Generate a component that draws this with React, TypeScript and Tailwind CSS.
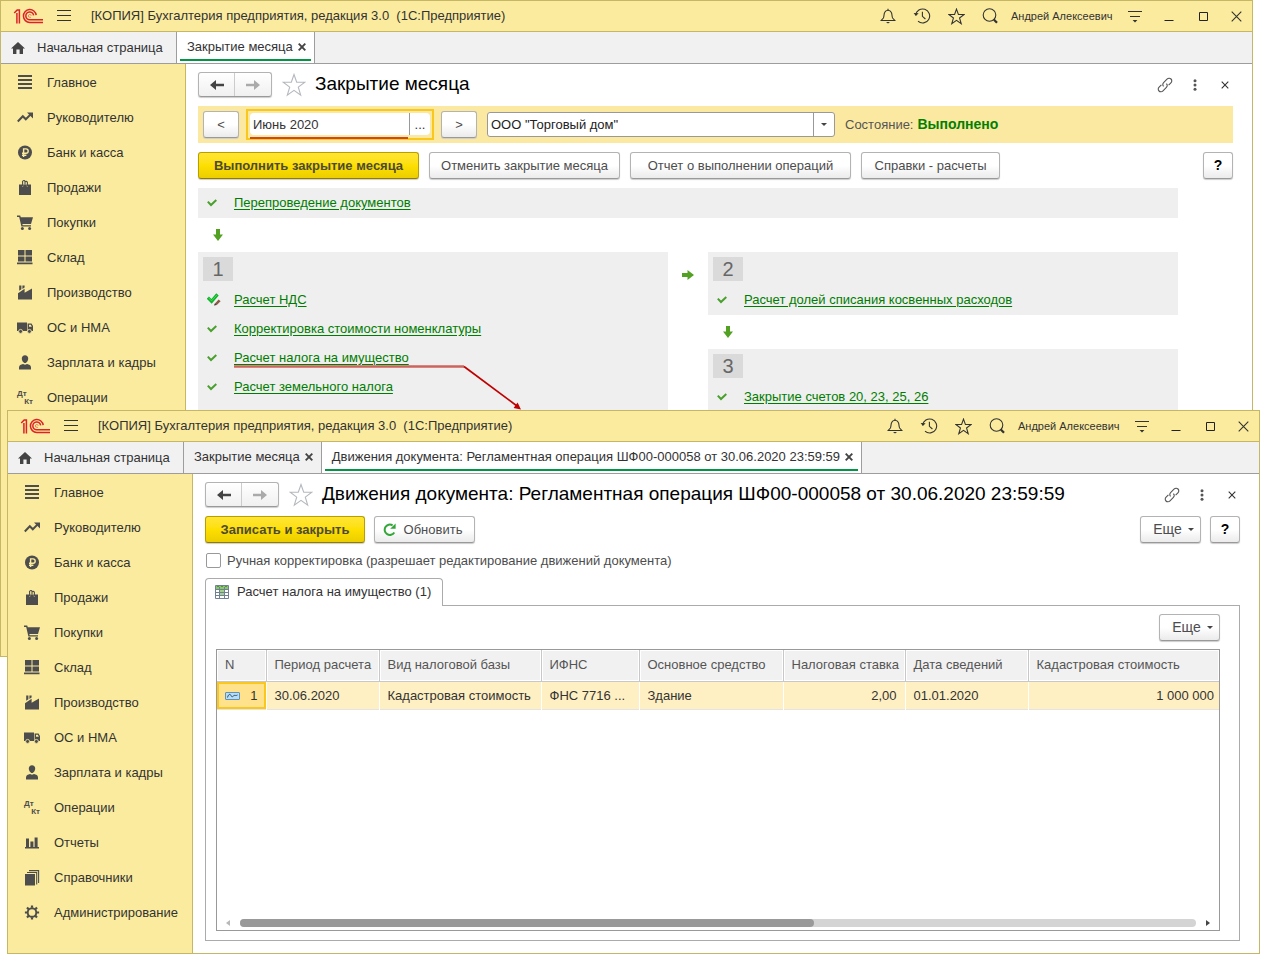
import type { ReactNode } from 'react';
import clsx from 'clsx';

const INK = '#4d4d4d';

/* ---------- title bar drawings ---------- */

const Logo = () => (
  <svg width="30" height="16" viewBox="0 0 30 16" fill="none" stroke="#dc2127" strokeWidth="1.5" aria-hidden="true">
    <path d="M1.2 5L4.2 2H6.4V15.400M3.900 5V15.400" />
    <path d="M23.200 7.200A6.400 6.400 0 1 0 16.800 14.400H30" />
    <path d="M20.600 7.400A3.900 3.900 0 1 0 16.800 11.800H30" />
    <path d="M18.200 7.800A1.400 1.400 0 1 0 16.800 9.300H18" strokeWidth="1" strokeOpacity=".5" />
  </svg>
);

const Burger = () => (
  <svg width="14" height="12" viewBox="0 0 14 12" stroke="#333" aria-hidden="true">
    <path d="M0 .5H14M0 5.5H14M0 10.5H14" />
  </svg>
);

const Bell = () => (
  <svg width="16" height="16" viewBox="0 0 16 16" fill="none" stroke="#333" strokeWidth="1.1" aria-hidden="true">
    <path d="M1.2 12.5H14.8L12.6 10C11.8 8.8 12.2 6 11.4 4.4C10.8 3.1 9.6 2.2 8 2.2S5.2 3.1 4.6 4.4C3.8 6 4.2 8.8 3.4 10Z" />
    <path d="M8 .8V2.2" />
    <path d="M6 14H10L8 15.6Z" fill="#333" stroke="none" />
  </svg>
);

const History = () => (
  <svg width="18" height="16" viewBox="0 0 18 16" fill="none" stroke="#333" strokeWidth="1.1" aria-hidden="true">
    <path d="M2.7 7.2A7 7 0 1 1 5 13.2" />
    <path d="M9.4 3.8V8.3L12.4 11" />
    <path d="M.6 4.9L2.9 8L5.6 5.2Z" fill="#333" stroke="none" />
  </svg>
);

const Star = ({ size, color }: { size: number; color: string }) => (
  <svg width={size} height={size} viewBox="0 0 24 24" fill="none" stroke={color} strokeWidth={size > 18 ? 1.1 : 1.5} aria-hidden="true">
    <path d="M12 1.5L14.7 9.2H22.8L16.3 14.1L18.7 22.2L12 17.4L5.3 22.2L7.7 14.1L1.2 9.2H9.3Z" />
  </svg>
);

const Magnifier = () => (
  <svg width="16" height="16" viewBox="0 0 16 16" fill="none" stroke="#333" aria-hidden="true">
    <circle cx="7.5" cy="7" r="6.3" strokeWidth="1.1" />
    <path d="M11.8 11.4L15 14.8" strokeWidth="2.2" />
  </svg>
);

const ServiceMenu = () => (
  <svg width="14" height="13" viewBox="0 0 14 13" stroke="#333" aria-hidden="true">
    <path d="M0 1.5H14M2 6.5H12" />
    <path d="M4.6 10H9.4L7 12.6Z" fill="#333" stroke="none" />
  </svg>
);

const Minimize = () => (
  <svg width="10" height="10" viewBox="0 0 10 10" stroke="#222" aria-hidden="true"><path d="M.5 9.5H9.5" /></svg>
);
const Maximize = () => (
  <svg width="9" height="9" viewBox="0 0 9 9" fill="none" stroke="#222" aria-hidden="true"><path d="M.5 .5H8.5V8.5H.5Z" /></svg>
);
const Cross = ({ size, width = 1.1, color = '#333' }: { size: number; width?: number; color?: string }) => (
  <svg width={size} height={size} viewBox={`0 0 ${size} ${size}`} stroke={color} strokeWidth={width} aria-hidden="true">
    <path d={`M.7 .7L${size - 0.7} ${size - 0.7}M${size - 0.7} .7L.7 ${size - 0.7}`} />
  </svg>
);

const Home = () => (
  <svg width="14" height="12" viewBox="0 0 14 12" fill="#444" aria-hidden="true">
    <path d="M7 0L14 6.6H12V12H8.6V7.6H5.4V12H2V6.6H0Z" />
  </svg>
);

/* ---------- page header drawings ---------- */

const Arrow = ({ flip, color }: { flip?: boolean; color: string }) => (
  <svg width="14" height="10" viewBox="0 0 14 10" fill={color} className={flip ? 'rotate-180' : ''} aria-hidden="true">
    <path d="M0 5L6 0V3.7H14V6.3H6V10Z" />
  </svg>
);

const ChainLink = () => (
  <svg width="16" height="16" viewBox="0 0 16 16" fill="none" stroke="#555" strokeWidth="1.1" aria-hidden="true">
    <path d="M6.6 9.4C5.4 8.2 5.6 6.6 6.6 5.6L10 2.2C11.2 1 13 1 14 2C15.1 3.1 15 4.8 13.9 5.9L11.6 8.2" />
    <path d="M9.4 6.6C10.6 7.8 10.4 9.4 9.4 10.4L6 13.8C4.8 15 3 15 2 14C.9 12.9 1 11.2 2.1 10.1L4.4 7.8" />
  </svg>
);

const Dots = () => (
  <svg width="4" height="12" viewBox="0 0 4 12" fill="#555" aria-hidden="true">
    <circle cx="2" cy="1.7" r="1.5" /><circle cx="2" cy="6" r="1.5" /><circle cx="2" cy="10.3" r="1.5" />
  </svg>
);

const Caret = () => (
  <svg width="6" height="3" viewBox="0 0 6 3" fill="#444" aria-hidden="true"><path d="M0 0H6L3 3Z" /></svg>
);

/* ---------- section icons ---------- */

const Icon = ({ children }: { children: ReactNode }) => (
  <svg width="16" height="16" viewBox="0 0 16 16" fill={INK} aria-hidden="true">{children}</svg>
);

const icons = {
  main: <Icon><path d="M1 0H15V2H1ZM1 4H15V6H1ZM1 8H15V10H1ZM1 12H15V14H1Z" /></Icon>,
  chief: (
    <Icon>
      <path d="M.8 11.500L5.8 6.200L8.8 9.300L13.4 4.600" fill="none" stroke={INK} strokeWidth="2" />
      <path d="M10 2.400H16V8.600L14 6.600L12 4.600Z" />
    </Icon>
  ),
  bank: (
    <Icon>
      <circle cx="8" cy="7.500" r="7" />
      <path d="M6.600 11.900V3.900H9A2.100 2.100 0 0 1 9 8.300H5M5 10.200H9.400" fill="none" stroke="#fbeb9e" strokeWidth="1.4" />
    </Icon>
  ),
  sales: (
    <Icon>
      <path d="M2 4.500H5.200V6.500H6.200V4.500H9.800V6.500H10.800V4.500H14V15H2Z" />
      <path d="M5.600 6V2.400A1.300 1.300 0 0 1 8 1.400V4.500M8 4.500V2A1.300 1.300 0 0 1 10.400 2.400V6" fill="none" stroke={INK} strokeWidth="1.100" />
    </Icon>
  ),
  purchases: (
    <Icon>
      <path d="M0 .5H3.2L3.8 2.2H16L14 9H5.4L5.6 10.2H14V11.600H4.400L2.200 2H0Z" />
      <circle cx="5.400" cy="13.400" r="1.500" /><circle cx="12.600" cy="13.400" r="1.500" />
    </Icon>
  ),
  stock: <Icon><path d="M1 0H7.500V5.500H1ZM8.500 0H15V5.500H8.500ZM1 6.500H7.500V11.500H1ZM8.500 6.500H15V11.500H8.500ZM0 12.500H15.500V14.200H0Z" /></Icon>,
  production: (
    <Icon>
      <path d="M1 14.500V8.200L7.600 3.800V7.800L15 3.500V14.500Z" />
      <path d="M2.200 .5H4.400V4.200L2.200 5.800ZM5.400 .5H7.600V2.400L5.400 4Z" />
    </Icon>
  ),
  assets: (
    <Icon>
      <path d="M0 2.500H10V11H0ZM10.600 3.500H14.500L16 6V11H10.600Z" />
      <path d="M12 4.700H13.800L14.800 6.800H12Z" fill="#fbeb9e" />
      <circle cx="3.600" cy="11.400" r="2" stroke="#fbeb9e" strokeWidth=".8" /><circle cx="12.400" cy="11.400" r="2" stroke="#fbeb9e" strokeWidth=".8" />
    </Icon>
  ),
  staff: (
    <Icon>
      <path d="M8 .3C10 .3 11.2 1.700 11.2 3.500C11.2 5.500 9.800 8 8 8S4.800 5.500 4.800 3.500C4.800 1.700 6 .3 8 .3Z" />
      <path d="M2 14.500V12.400C2 10.200 4 9.400 6 8.900L8 9.700L10 8.900C12 9.400 14 10.200 14 12.400V14.500Z" />
    </Icon>
  ),
  operations: (
    <span className="flex w-4 flex-col text-[8px] leading-[8px] font-bold text-[#4d4d4d]" aria-hidden="true">
      <span>Дт</span>
      <span className="self-end">Кт</span>
    </span>
  ),
  reports: <Icon><path d="M2 3.500H5V12H2ZM6.400 6.400H9.400V12H6.400ZM10.600 2.600H13.600V12H10.600ZM1 12H15V13.500H1Z" /></Icon>,
  catalogs: (
    <Icon>
      <path d="M1 4H11V15.500H1Z" />
      <path d="M3 2.500H12.700V14.600M5 .6H14.600V13" fill="none" stroke={INK} strokeWidth="1.1" />
    </Icon>
  ),
  admin: (
    <Icon>
      <circle cx="8" cy="7.500" r="4.300" fill="none" stroke={INK} strokeWidth="1.900" />
      <path d="M8 .4V2.800M8 12.200V14.600M.9 7.500H3.300M12.700 7.500H15.100M3 2.500L4.700 4.200M11.300 10.800L13 12.500M3 12.500L4.700 10.800M11.300 4.200L13 2.500" stroke={INK} strokeWidth="2.200" />
    </Icon>
  ),
};

type Section = { icon: keyof typeof icons; label: string };

const sections: Section[] = [
  { icon: 'main', label: 'Главное' },
  { icon: 'chief', label: 'Руководителю' },
  { icon: 'bank', label: 'Банк и касса' },
  { icon: 'sales', label: 'Продажи' },
  { icon: 'purchases', label: 'Покупки' },
  { icon: 'stock', label: 'Склад' },
  { icon: 'production', label: 'Производство' },
  { icon: 'assets', label: 'ОС и НМА' },
  { icon: 'staff', label: 'Зарплата и кадры' },
  { icon: 'operations', label: 'Операции' },
  { icon: 'reports', label: 'Отчеты' },
  { icon: 'catalogs', label: 'Справочники' },
  { icon: 'admin', label: 'Администрирование' },
];

/* ---------- window chrome ---------- */

const BarButton = ({ label, className, children }: { label: string; className?: string; children: ReactNode }) => (
  <button type="button" aria-label={label} className={clsx('flex h-[30px] shrink-0 items-center justify-center', className ?? 'w-[34px]')}>
    {children}
  </button>
);

const TitleBar = () => (
  <header className="flex h-[31px] shrink-0 items-center border-b border-[#c6b765] bg-[#fbeb9e] pl-3 text-[13px] text-[#333]">
    <Logo />
    <button type="button" aria-label="Главное меню" className="ml-[14px] flex h-[30px] items-center"><Burger /></button>
    <span className="ml-5 whitespace-nowrap">[КОПИЯ] Бухгалтерия предприятия, редакция 3.0{'\u00a0'} (1С:Предприятие)</span>
    <div className="ml-auto flex items-center">
      <BarButton label="Уведомления"><Bell /></BarButton>
      <BarButton label="История"><History /></BarButton>
      <BarButton label="Избранное"><Star size={17} color="#333" /></BarButton>
      <BarButton label="Поиск"><Magnifier /></BarButton>
      <span className="w-[111px] pl-1 text-[11px] whitespace-nowrap">Андрей Алексеевич</span>
      <BarButton label="Настройки"><ServiceMenu /></BarButton>
      <BarButton label="Свернуть"><Minimize /></BarButton>
      <BarButton label="Развернуть"><Maximize /></BarButton>
      <BarButton label="Закрыть" className="w-8"><Cross size={11} /></BarButton>
    </div>
  </header>
);

const Tab = ({ label, active }: { label: string; active?: boolean }) => (
  <div className={clsx('flex border-r border-[#9d9d9d] px-[3px]', active && 'bg-white')}>
    <div className={clsx('mb-0.5 flex items-center gap-[5px] border-b-2 pt-[3px] pr-[5px] pl-[7px]', active ? 'border-[#009646]' : 'border-transparent')}>
      <a href="#" className="whitespace-nowrap">{label}</a>
      <button type="button" aria-label={`Закрыть ${label}`} className="flex w-2 items-center py-1"><Cross size={8} width={1.9} color="#444" /></button>
    </div>
  </div>
);

const TabBar = ({ tabs }: { tabs: string[] }) => (
  <nav className="flex h-8 shrink-0 border-b border-[#9d9d9d] bg-[#f1f1f1] text-[13px] text-[#333]">
    <a href="#" className="flex w-[176px] items-center gap-3 border-r border-[#9d9d9d] pl-[10px] whitespace-nowrap"><Home />Начальная страница</a>
    {tabs.map((tab, i) => <Tab key={tab} label={tab} active={i === tabs.length - 1} />)}
  </nav>
);

const Sidebar = ({ items }: { items: Section[] }) => (
  <ul className="w-[185px] shrink-0 border-r border-[#c6b765] bg-[#fbeb9e] pb-6 text-[13px] text-[#333]">
    {items.map(({ icon, label }) => (
      <li key={label}>
        <a href="#" className="flex h-[35px] items-center gap-[14px] pt-0.5 pl-4 whitespace-nowrap">{icons[icon]}{label}</a>
      </li>
    ))}
  </ul>
);

const Window = ({ tabs, items, className, children }: { tabs: string[]; items: Section[]; className?: string; children: ReactNode }) => (
  <section className={clsx('flex flex-col border border-[#c6b765] bg-white', className)}>
    <TitleBar />
    <TabBar tabs={tabs} />
    <div className="flex min-h-0 flex-1">
      <Sidebar items={items} />
      <div className="flex min-w-0 flex-1 flex-col pt-2 pr-[19px] pb-3 pl-3">{children}</div>
    </div>
  </section>
);

const PageHeader = ({ title }: { title: string }) => (
  <div className="flex h-[25px] shrink-0 items-center">
    <div className="flex h-[25px] rounded-[3px] border border-[#b3b3b3] border-b-[#999] bg-linear-to-b from-white to-[#f0f0f0] shadow-[0_1px_1px_#ccc]">
      <button type="button" aria-label="Назад" className="flex w-9 items-center justify-center border-r border-[#ccc]"><Arrow color="#444" /></button>
      <button type="button" aria-label="Вперед" className="flex w-9 items-center justify-center"><Arrow flip color="#aaa" /></button>
    </div>
    <button type="button" aria-label="В избранное" className="ml-[10px]"><Star size={24} color="#b4b8be" /></button>
    <h1 className="ml-[9px] text-[19px] whitespace-nowrap text-black">{title}</h1>
    <div className="ml-auto flex gap-[14px]">
      <button type="button" aria-label="Ссылка" className="flex w-4 items-center justify-center"><ChainLink /></button>
      <button type="button" aria-label="Дополнительно" className="flex w-4 items-center justify-center"><Dots /></button>
      <button type="button" aria-label="Закрыть форму" className="flex w-4 items-center justify-center"><Cross size={8} /></button>
    </div>
  </div>
);

const Button = ({ primary, className, children }: { primary?: boolean; className?: string; children: ReactNode }) => (
  <button
    type="button"
    className={clsx(
      'flex h-[27px] shrink-0 items-center justify-center rounded-[3px] border bg-linear-to-b text-[13px] whitespace-nowrap shadow-[0_1px_1px_#ccc]',
      primary
        ? 'border-[#b79f00] border-b-[#8f7c00] from-[#ffe533] via-[#fddf00] to-[#ecce00] font-bold text-[#4d4a33]'
        : 'border-[#b3b3b3] border-b-[#999] from-white via-white to-[#ebebeb] text-[#4d4d4d]',
      className,
    )}
  >
    {children}
  </button>
);

const HelpButton = () => <Button className="ml-auto w-[30px]"><span className="text-[14px] font-bold text-black">?</span></Button>;

/* ---------- month closing ---------- */

const Check = () => (
  <svg width="10" height="8" viewBox="0 0 10 8" fill="none" stroke="#4aa02c" strokeWidth="2" aria-hidden="true"><path d="M.8 2.600L4 6L9.300 1" /></svg>
);

const CheckEdited = () => (
  <svg width="14" height="13" viewBox="0 0 14 13" fill="none" aria-hidden="true">
    <path d="M.8 4.600L4.600 8.400L10.500 1.400" stroke="#12b32c" strokeWidth="3.200" />
    <path d="M1.400 4.800L4.600 7.800L10 1.800" stroke="#3fe04f" strokeWidth="1" />
    <path d="M7.800 10.800L11.600 6.600L13.600 8.200L9.800 12Z" fill="#8a5a44" />
    <path d="M7 12.600L7.800 10.600L9.800 12Z" fill="#3a2a22" />
  </svg>
);

const FlowArrow = ({ right }: { right?: boolean }) => (
  <svg width="12" height="12" viewBox="0 0 12 12" fill="#52a122" className={right ? '-rotate-90' : ''} aria-hidden="true">
    <path d="M4 0H8V5.500H11L6 12L1 5.500H4Z" />
  </svg>
);

const Operation = ({ label, edited, children }: { label: string; edited?: boolean; children?: ReactNode }) => (
  <li className="relative flex h-[29px] items-center pl-[9px] text-[13px]">
    <span className="w-[27px]">{edited ? <CheckEdited /> : <Check />}</span>
    <a href="#" className="whitespace-nowrap text-[#007d00] underline underline-offset-2">{label}</a>
    {children}
  </li>
);

const Stage = ({ number, className, children }: { number: number; className?: string; children: ReactNode }) => (
  <div className={clsx('bg-[#efefef] pt-[5px]', className)}>
    <div className="mb-1 ml-[5px] flex h-6 w-[30px] items-center justify-center bg-[#dadada] text-[20px] text-[#666]">{number}</div>
    <ul className="pb-px">{children}</ul>
  </div>
);

const CalloutArrow = () => (
  <svg width="292" height="50" viewBox="0 0 292 50" fill="none" className="pointer-events-none absolute top-[21px] left-[35px]" aria-hidden="true">
    <path d="M1 2.500H231" stroke="#c0281c" strokeOpacity=".7" strokeWidth="2.400" />
    <path d="M231 2.500L284 42" stroke="#c00000" strokeWidth="1.700" />
    <path d="M288 45.500L280.600 44L284.600 38.600Z" fill="#c00000" />
  </svg>
);

const MonthClosing = () => (
  <>
    <PageHeader title="Закрытие месяца" />
    <div className="mt-[9px] flex h-[37px] shrink-0 items-center bg-[#fce9a1] px-[5px] text-[13px]">
      <Button className="w-9">&lt;</Button>
      <div className="ml-[7px] flex h-[31px] w-[188px] border-2 border-[#fac71e] p-0.5">
        <div className="flex flex-1 flex-col">
          <div className="flex h-[23px] rounded-sm bg-white">
            <input aria-label="Период" defaultValue="Июнь 2020" className="w-[160px] border-r border-[#999] pt-0.5 pl-[3px] text-[#333] outline-none" />
            <button type="button" aria-label="Выбрать период" className="flex-1 pt-0.5 text-[#333]">...</button>
          </div>
          <div className="h-0.5 w-[158px] shrink-0 translate-y-0.5 bg-[#c9472a]" />
        </div>
      </div>
      <Button className="ml-[7px] w-9">&gt;</Button>
      <div className="ml-[10px] flex h-[25px] w-[348px] overflow-hidden rounded-[3px] border border-[#999] bg-white">
        <select aria-label="Организация" className="min-w-0 flex-1 appearance-none pl-[3px] text-[#222] outline-none">
          <option>ООО "Торговый дом"</option>
        </select>
        <span className="pointer-events-none flex w-[21px] items-center justify-center border-l border-[#999]"><Caret /></span>
      </div>
      <span className="ml-[10px] text-[#555]">Состояние:</span>
      <span className="ml-1 text-[14px] font-bold text-[#008000]">Выполнено</span>
    </div>
    <div className="mt-[9px] flex shrink-0 gap-[10px]">
      <Button primary className="w-[221px]">Выполнить закрытие месяца</Button>
      <Button className="w-[191px]">Отменить закрытие месяца</Button>
      <Button className="w-[221px]">Отчет о выполнении операций</Button>
      <Button className="w-[139px]">Справки - расчеты</Button>
      <HelpButton />
    </div>
    <div className="mt-[9px] mr-[55px] flex min-h-0 flex-1 flex-col">
      <ul className="h-[30px] shrink-0 bg-[#efefef]"><Operation label="Перепроведение документов" /></ul>
      <div className="flex h-[34px] shrink-0 items-center pl-[14px]"><FlowArrow /></div>
      <div className="flex min-h-0 flex-1">
        <Stage number={1} className="flex-1">
          <Operation label="Расчет НДС" edited />
          <Operation label="Корректировка стоимости номенклатуры" />
          <Operation label="Расчет налога на имущество"><CalloutArrow /></Operation>
          <Operation label="Расчет земельного налога" />
        </Stage>
        <div className="flex w-10 justify-center pt-[17px]"><FlowArrow right /></div>
        <div className="flex flex-1 flex-col">
          <Stage number={2}><Operation label="Расчет долей списания косвенных расходов" /></Stage>
          <div className="flex h-[34px] shrink-0 items-center pl-[14px]"><FlowArrow /></div>
          <Stage number={3} className="flex-1"><Operation label="Закрытие счетов 20, 23, 25, 26" /></Stage>
        </div>
      </div>
    </div>
  </>
);

/* ---------- document movements ---------- */

const Refresh = () => (
  <svg width="13" height="13" viewBox="0 0 13 13" fill="none" aria-hidden="true">
    <path d="M11.300 9.500A5.200 5.200 0 1 1 9.600 2.300" stroke="#33a63a" strokeWidth="2" />
    <path d="M12.600 .4V5.800H7.200Z" fill="#33a63a" />
  </svg>
);

const TableGlyph = () => (
  <svg width="14" height="14" viewBox="0 0 14 14" aria-hidden="true">
    <path d="M.5 .5H13.500V13.500H.5Z" fill="#fff" stroke="#6f8193" />
    <path d="M1 1H13V4H1Z" fill="#8cc56e" />
    <path d="M5 4H9V10H5Z" fill="#a3cf8c" />
    <path d="M1 4.500H13M1 7.500H13M1 10.500H13M4.500 2V13M9.500 2V13" stroke="#6f8193" />
    <path d="M2 1.500H4M6 1.500H8M10 1.500H12" stroke="#4b9a2c" />
  </svg>
);

const RecordGlyph = () => (
  <svg width="15" height="8" viewBox="0 0 15 8" fill="none" aria-hidden="true">
    <rect x=".5" y=".5" width="14" height="7" rx=".5" fill="#b9dcf3" stroke="#5c93bd" />
    <path d="M2.500 5.500C3.500 2 5 1.500 6 3.500C7 6 8 4 9 3.500S11 4 12.500 3" stroke="#1f4e79" />
  </svg>
);

const columns = [
  { title: 'N', width: 'w-[49px]' },
  { title: 'Период расчета', width: 'w-[113px]' },
  { title: 'Вид налоговой базы', width: 'w-[162px]' },
  { title: 'ИФНС', width: 'w-[98px]' },
  { title: 'Основное средство', width: 'w-[144px]' },
  { title: 'Налоговая ставка', width: 'w-[122px]' },
  { title: 'Дата сведений', width: 'w-[123px]' },
  { title: 'Кадастровая стоимость', width: '' },
];

const MoreButton = ({ className }: { className?: string }) => (
  <Button className={clsx('w-[61px] gap-[6px] pl-[6px]', className)}><span className="text-[14px]">Еще</span><Caret /></Button>
);

const cell = 'truncate border-r border-r-white px-2 pt-px last:border-r-0';

const Movements = () => (
  <>
    <PageHeader title="Движения документа: Регламентная операция ШФ00-000058 от 30.06.2020 23:59:59" />
    <div className="mt-[9px] flex shrink-0 gap-[9px]">
      <Button primary className="w-40">Записать и закрыть</Button>
      <Button className="w-[101px] gap-2 pr-1"><Refresh />Обновить</Button>
      <MoreButton className="ml-auto" />
      <div><HelpButton /></div>
    </div>
    <label className="mt-[10px] flex h-[15px] shrink-0 items-center gap-[6px] text-[13px] whitespace-nowrap text-[#4d4d4d]">
      <input type="checkbox" className="ml-px size-[15px] appearance-none rounded-xs border border-[#999] bg-white checked:bg-[#009646]" />
      Ручная корректировка (разрешает редактирование движений документа)
    </label>
    <div className="z-10 mt-[10px] flex shrink-0">
      <button type="button" className="-mb-px flex h-7 w-[238px] items-center gap-2 rounded-t-[4px] border border-b-0 border-[#ababab] bg-white pb-0.5 pl-[9px] text-[13px] whitespace-nowrap text-[#333]">
        <TableGlyph />Расчет налога на имущество (1)
      </button>
    </div>
    <div className="flex flex-1 flex-col border border-[#ababab] pt-2 pr-[19px] pb-[9px] pl-[10px]">
      <MoreButton className="self-end" />
      <div className="mt-2 flex flex-1 flex-col border border-[#999]">
        <table className="w-full table-fixed text-left text-[13px] text-[#333]">
          <thead>
            <tr className="h-[31px]">
              {columns.map(({ title, width }) => (
                <th key={title} className={clsx('border-r border-b border-[#c8c8c8] bg-[#f1f1f1] px-2 pb-0.5 font-normal whitespace-nowrap text-[#555] shadow-[inset_0_0_0_1px_#fff] last:border-r-0', width)}>{title}</th>
              ))}
            </tr>
          </thead>
          <tbody>
            <tr className="h-7 border-b border-[#e4e4e4] bg-[#fff0c3]">
              <td className="border-r border-r-white bg-[#ffe28b] px-2 pt-px shadow-[inset_0_0_0_2px_#fac71e]">
                <span className="flex items-center justify-between"><RecordGlyph />1</span>
              </td>
              <td className={cell}>30.06.2020</td>
              <td className={cell}>Кадастровая стоимость</td>
              <td className={cell}>ФНС 7716 ...</td>
              <td className={cell}>Здание</td>
              <td className={clsx(cell, 'text-right')}>2,00</td>
              <td className={cell}>01.01.2020</td>
              <td className="pt-px pr-[5px] text-right">1 000 000</td>
            </tr>
          </tbody>
        </table>
        <div className="mt-auto flex h-[14px] items-center gap-[10px] px-[9px]">
          <svg width="4" height="6" viewBox="0 0 4 6" fill="#b8b8b8" aria-hidden="true"><path d="M4 0V6L0 3Z" /></svg>
          <div className="h-2 flex-1 rounded-full bg-[#d4d4d4]"><div className="h-2 w-3/5 rounded-full bg-[#999]" /></div>
          <svg width="4" height="6" viewBox="0 0 4 6" fill="#444" aria-hidden="true"><path d="M0 0V6L4 3Z" /></svg>
        </div>
      </div>
    </div>
  </>
);

export default function App() {
  return (
    <main className="relative min-h-screen overflow-hidden bg-white font-['Liberation_Sans',Arial,sans-serif]">
      <Window tabs={['Закрытие месяца']} items={sections.slice(0, 10)} className="mr-[9px] h-[657px]">
        <MonthClosing />
      </Window>
      <Window
        tabs={['Закрытие месяца', 'Движения документа: Регламентная операция ШФ00-000058 от 30.06.2020 23:59:59']}
        items={sections}
        className="absolute top-[410px] right-[2px] left-[7px]"
      >
        <Movements />
      </Window>
    </main>
  );
}
